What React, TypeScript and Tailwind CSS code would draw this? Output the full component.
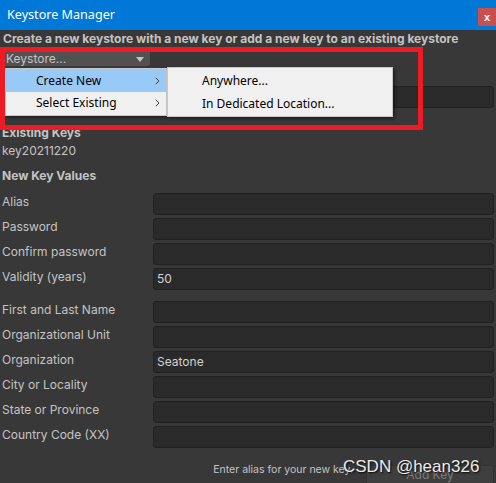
import React from "react";

function Field({ value }: { value: string }) {
  return (
    <div className="flex-1 mr-[2px] h-[22px] rounded-[3px] bg-[#2a2a2a] border border-[#212121] flex items-center pl-[3px] text-[#d2d2d2]">
      {value}
    </div>
  );
}

function Row({ label, value }: { label: string; value: string }) {
  return (
    <div className="flex items-center h-[22px]">
      <div className="w-[153px] pl-[2px] mt-[-4px]">{label}</div>
      <Field value={value} />
    </div>
  );
}

function Chevron() {
  return (
    <svg width="5" height="8" viewBox="0 0 5 8" className="block">
      <polyline points="0.8,0.8 4,4 0.8,7.2" fill="none" stroke="#404040" strokeWidth="1" />
    </svg>
  );
}

export default function App() {
  const rows1: [string, string][] = [
    ["Alias", ""],
    ["Password", ""],
    ["Confirm password", ""],
    ["Validity (years)", "50"],
  ];
  const rows2: [string, string][] = [
    ["First and Last Name", ""],
    ["Organizational Unit", ""],
    ["Organization", "Seatone"],
    ["City or Locality", ""],
    ["State or Province", ""],
    ["Country Code (XX)", ""],
  ];
  return (
    <div className="relative w-[496px] h-[483px] overflow-hidden bg-[#383838] font-['Inter',sans-serif] text-[12px] leading-[16px] text-[#c4c4c4]">
      <div className="h-[30px] bg-[#0078d7] flex items-start justify-between">
        <span className="ml-[7px] mt-[6px] text-[12.6px] leading-[18px] text-white font-['Noto_Sans',sans-serif]">
          Keystore Manager
        </span>
        <div className="mt-[8px] w-[18px] h-[18px] bg-[#c75050] text-white flex items-center justify-center text-[11px] font-bold font-['Liberation_Sans',sans-serif]">
          x
        </div>
      </div>

      <div className="h-[18px] flex items-center pl-[3px] font-bold">
        Create a new keystore with a new key or add a new key to an existing keystore
      </div>

      <div className="mt-[4px] ml-[5px] w-[145px] h-[14px] bg-[#515151] rounded-br-[3px] flex items-center justify-between pl-[1px] pr-[6px] text-[#c4c4c4]">
        <span>Keystore...</span>
        <svg width="8" height="5" viewBox="0 0 8 5">
          <polygon points="0,0 8,0 4,5" fill="#c4c4c4" />
        </svg>
      </div>

      <div className="mt-[20px] flex items-center h-[22px]">
        <div className="w-[153px]" />
        <Field value="" />
      </div>

      <div className="mt-[16px] h-[18px] flex items-center pl-[2px] font-bold">Existing Keys</div>
      <div className="h-[18px] flex items-center pl-[2px]">key20211220</div>
      <div className="mt-[7px] h-[18px] flex items-center pl-[2px] font-bold">New Key Values</div>

      <div className="mt-[8px] flex flex-col gap-[3px]">
        {rows1.map(([l, v]) => (
          <Row key={l} label={l} value={v} />
        ))}
      </div>

      <div className="mt-[11px] flex flex-col gap-[3px]">
        {rows2.map(([l, v]) => (
          <Row key={l} label={l} value={v} />
        ))}
      </div>

      <div className="mt-[17px] flex justify-end items-start">
        <span className="mt-[-2px] text-[10.5px] leading-[14px] text-[#c4c4c4]">Enter alias for your new key.</span>
        <div className="ml-[13px] mr-[2px] w-[128px] h-[20px] rounded-[3px] bg-[#3f3f3f] border border-[#333333] flex items-center justify-center text-[#7c7c7c]">
          Add Key
        </div>
      </div>

      {/* watermark */}
      <div className="absolute left-[343px] top-[457px] text-[17px] leading-[20px] text-[#ececec] font-['Liberation_Sans',Arial,sans-serif] [text-shadow:1px_1px_2px_#000]">
        CSDN @hean326
      </div>

      {/* popup menu */}
      <div className="absolute left-[5px] top-[68px] w-[162px] h-[48px] bg-[#f0f0f0] border border-[#c8c8c8] shadow-[2px_2px_3px_rgba(0,0,0,0.45)] font-['Noto_Sans',sans-serif] text-[12px] text-black">
        <div className="h-[23px] bg-[#99c9f7] flex items-center justify-between pl-[30px] pr-[6px]">
          <span>Create New</span>
          <Chevron />
        </div>
        <div className="h-[22px] flex items-center justify-between pl-[30px] pr-[6px]">
          <span>Select Existing</span>
          <Chevron />
        </div>
      </div>
      <div className="absolute left-[167px] top-[67px] w-[226px] h-[50px] bg-[#f0f0f0] border border-[#c8c8c8] shadow-[2px_2px_3px_rgba(0,0,0,0.45)] font-['Noto_Sans',sans-serif] text-[12px] text-black">
        <div className="h-[24px] mt-[1px] flex items-center pl-[34px]">Anywhere...</div>
        <div className="h-[22px] flex items-center pl-[34px]">In Dedicated Location...</div>
      </div>

      {/* red annotation box */}
      <div className="absolute left-0 top-[47px] w-[423px] h-[83px] border-[5px] border-[#ed1c24] pointer-events-none" />
    </div>
  );
}
